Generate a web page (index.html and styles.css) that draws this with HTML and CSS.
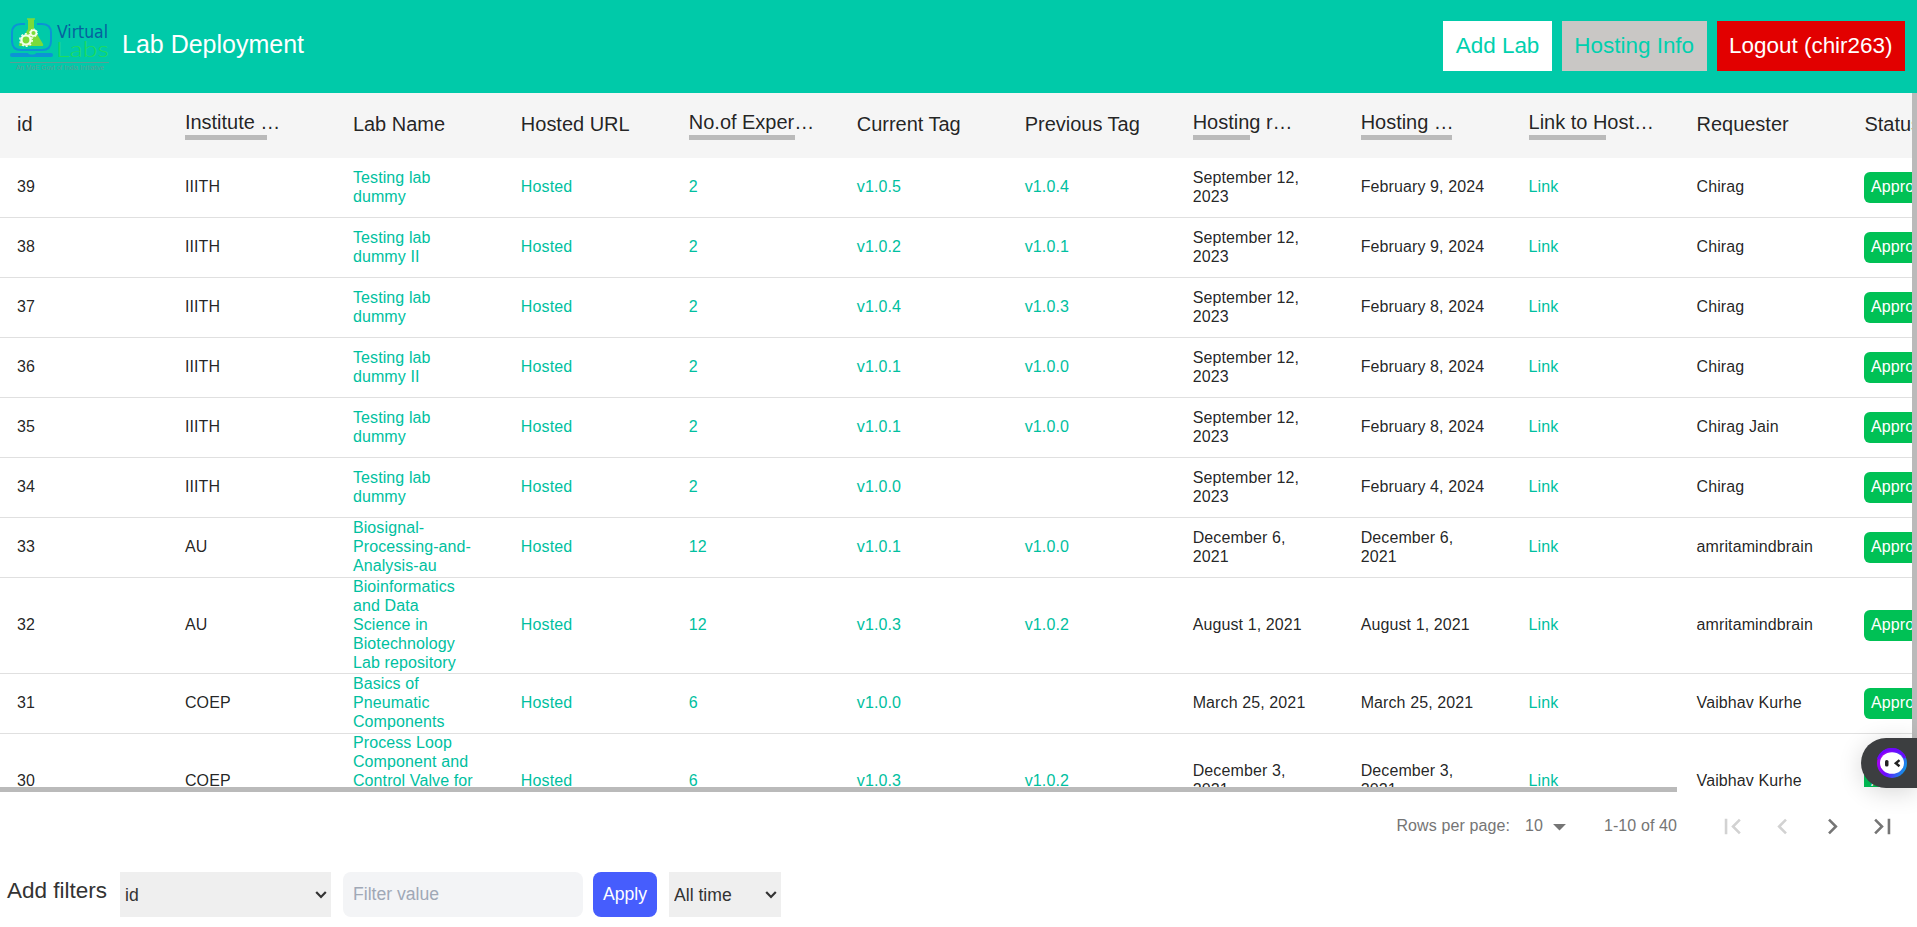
FILE: index.html
```html
<!DOCTYPE html>
<html lang="en">
<head>
<meta charset="utf-8">
<title>Lab Deployment</title>
<link rel="stylesheet" href="styles.css">
</head>
<body>
<header class="topbar">
  <svg class="logo" width="102" height="56" viewBox="0 0 102 56">
    <path d="M17 6H13Q4 6 4 15V23Q4 32 13 32H34Q43 32 43 23V15Q43 6 34 6H29" fill="none" stroke="#0c93d6" stroke-width="2"/>
    <path d="M20 1H26V11L35 26Q36 28 33.500 28H12.500Q10 28 11 26L20 11Z" fill="#7bdb3a"/>
    <path d="M19 1H27" stroke="#7bdb3a" stroke-width="1.500"/>
    <circle cx="18" cy="22" r="4.600" fill="none" stroke="#f4ffe9" stroke-width="2.400"/>
    <circle cx="18" cy="22" r="6.200" fill="none" stroke="#f4ffe9" stroke-width="1.500" stroke-dasharray="2 1.900"/>
    <circle cx="25.500" cy="15" r="2.900" fill="none" stroke="#f4ffe9" stroke-width="1.700"/>
    <circle cx="25.500" cy="15" r="4" fill="none" stroke="#f4ffe9" stroke-width="1" stroke-dasharray="1.500 1.600"/>
    <path d="M4 35H20Q20.500 36.500 24 36.500Q27.500 36.500 28 35H43Q45 35 45 37Q45 39 43 39H4Q2 39 2 37Q2 35 4 35Z" fill="#0c93d6"/>
    <text class="logo-virtual" x="49" y="19.500" textLength="51" lengthAdjust="spacingAndGlyphs">Virtual</text>
    <text class="logo-labs" x="48" y="38.500" textLength="53" lengthAdjust="spacingAndGlyphs">Labs</text>
    <path d="M2 44.500H101" stroke="#5e9d94" stroke-width="1"/>
    <text class="logo-tag" x="8" y="52" textLength="88" lengthAdjust="spacingAndGlyphs">An MoE Govt of India Initiative</text>
  </svg>
  <h1 class="title">Lab Deployment</h1>
  <nav class="actions">
    <button class="btn btn-add">Add Lab</button>
    <button class="btn btn-info">Hosting Info</button>
    <button class="btn btn-logout">Logout (chir263)</button>
  </nav>
</header>

<main class="table-area">
  <div class="grid">
    <div class="row head">
      <span>id</span>
      <span class="clip">Institute …<i class="bar" style="width:82px"></i></span>
      <span>Lab Name</span><span>Hosted URL</span>
      <span class="clip">No.of Exper…<i class="bar" style="width:106px"></i></span>
      <span>Current Tag</span><span>Previous Tag</span>
      <span class="clip">Hosting r…<i class="bar" style="width:57px"></i></span>
      <span class="clip">Hosting …<i class="bar" style="width:91px"></i></span>
      <span class="clip">Link to Host…<i class="bar" style="width:77px"></i></span>
      <span>Requester</span><span>Status</span>
    </div>
    <div class="row"><span>39</span><span>IIITH</span><a>Testing lab dummy</a><a>Hosted</a><a>2</a><a>v1.0.5</a><a>v1.0.4</a><span>September 12, 2023</span><span>February 9, 2024</span><a>Link</a><span>Chirag</span><span><b class="badge">Approved</b></span></div>
    <div class="row"><span>38</span><span>IIITH</span><a>Testing lab dummy II</a><a>Hosted</a><a>2</a><a>v1.0.2</a><a>v1.0.1</a><span>September 12, 2023</span><span>February 9, 2024</span><a>Link</a><span>Chirag</span><span><b class="badge">Approved</b></span></div>
    <div class="row"><span>37</span><span>IIITH</span><a>Testing lab dummy</a><a>Hosted</a><a>2</a><a>v1.0.4</a><a>v1.0.3</a><span>September 12, 2023</span><span>February 8, 2024</span><a>Link</a><span>Chirag</span><span><b class="badge">Approved</b></span></div>
    <div class="row"><span>36</span><span>IIITH</span><a>Testing lab dummy II</a><a>Hosted</a><a>2</a><a>v1.0.1</a><a>v1.0.0</a><span>September 12, 2023</span><span>February 8, 2024</span><a>Link</a><span>Chirag</span><span><b class="badge">Approved</b></span></div>
    <div class="row"><span>35</span><span>IIITH</span><a>Testing lab dummy</a><a>Hosted</a><a>2</a><a>v1.0.1</a><a>v1.0.0</a><span>September 12, 2023</span><span>February 8, 2024</span><a>Link</a><span>Chirag Jain</span><span><b class="badge">Approved</b></span></div>
    <div class="row"><span>34</span><span>IIITH</span><a>Testing lab dummy</a><a>Hosted</a><a>2</a><a>v1.0.0</a><a></a><span>September 12, 2023</span><span>February 4, 2024</span><a>Link</a><span>Chirag</span><span><b class="badge">Approved</b></span></div>
    <div class="row"><span>33</span><span>AU</span><a>Biosignal-Processing-and-Analysis-au</a><a>Hosted</a><a>12</a><a>v1.0.1</a><a>v1.0.0</a><span>December 6, 2021</span><span>December 6, 2021</span><a>Link</a><span>amritamindbrain</span><span><b class="badge">Approved</b></span></div>
    <div class="row"><span>32</span><span>AU</span><a>Bioinformatics and Data Science in Biotechnology Lab repository</a><a>Hosted</a><a>12</a><a>v1.0.3</a><a>v1.0.2</a><span>August 1, 2021</span><span>August 1, 2021</span><a>Link</a><span>amritamindbrain</span><span><b class="badge">Approved</b></span></div>
    <div class="row"><span>31</span><span>COEP</span><a>Basics of Pneumatic Components</a><a>Hosted</a><a>6</a><a>v1.0.0</a><a></a><span>March 25, 2021</span><span>March 25, 2021</span><a>Link</a><span>Vaibhav Kurhe</span><span><b class="badge">Approved</b></span></div>
    <div class="row"><span>30</span><span>COEP</span><a>Process Loop Component and Control Valve for Flow Control Loop</a><a>Hosted</a><a>6</a><a>v1.0.3</a><a>v1.0.2</a><span>December 3, 2021</span><span>December 3, 2021</span><a>Link</a><span>Vaibhav Kurhe</span><span><b class="badge">Approved</b></span></div>
  </div>
  <div class="vbar"></div>
</main>
<div class="hbar"></div>

<div class="pager">
  <span class="pager-label">Rows per page:</span>
  <span class="pager-size">10</span>
  <svg class="caret" width="31" height="31" viewBox="0 0 24 24"><path d="M7 10l5 5 5-5z"/></svg>
  <span class="pager-range">1-10 of 40</span>
  <svg class="pg off" width="31" height="31" viewBox="0 0 24 24"><path d="M18.410 16.590L13.820 12l4.590-4.590L17 6l-6 6 6 6zM6 6h2v12H6z"/></svg>
  <svg class="pg off" width="31" height="31" viewBox="0 0 24 24"><path d="M15.410 7.410L14 6l-6 6 6 6 1.410-1.410L10.830 12z"/></svg>
  <svg class="pg" width="31" height="31" viewBox="0 0 24 24"><path d="M10 6L8.590 7.410 13.170 12l-4.580 4.590L10 18l6-6z"/></svg>
  <svg class="pg" width="31" height="31" viewBox="0 0 24 24"><path d="M5.590 7.410L10.180 12l-4.590 4.590L7 18l6-6-6-6zM16 6h2v12h-2z"/></svg>
</div>

<div class="filters">
  <label class="filters-label">Add filters</label>
  <select class="field-select wide"><option>id</option></select>
  <input class="field-input" placeholder="Filter value">
  <button class="apply">Apply</button>
  <select class="field-select"><option>All time</option></select>
</div>

<div class="assistant">
  <svg width="32" height="32" viewBox="0 0 32 32">
    <defs>
      <linearGradient id="ring" x1="0" y1="0.300" x2="1" y2="0.700">
        <stop offset="0" stop-color="#b400f0"/><stop offset="0.450" stop-color="#6a0cff"/><stop offset="1" stop-color="#0aa0e6"/>
      </linearGradient>
    </defs>
    <circle cx="16" cy="16" r="15" fill="url(#ring)"/>
    <path d="M2 12A14.500 14.500 0 0 1 29 11" fill="none" stroke="#6e08ff" stroke-width="2.500"/>
    <ellipse cx="16" cy="16" rx="12" ry="10.800" fill="#fff"/>
    <rect x="9" y="13" width="3.500" height="6.500" rx="1.600" fill="#222"/>
    <path d="M23.500 13.200L19.800 16.300L23.500 19.200" fill="none" stroke="#222" stroke-width="2.400"/>
  </svg>
</div>
</body>
</html>
```

FILE: styles.css
```css
* { box-sizing: border-box; }
body {
  margin: 0;
  height: 927px;
  overflow: hidden;
  display: flex;
  flex-direction: column;
  background: #fff;
  font-family: "Liberation Sans", Arial, sans-serif;
  font-size: 16px;
  color: rgba(0, 0, 0, 0.87);
}
button, input, select { font-family: inherit; border: 0; }

.topbar {
  flex: none;
  height: 93px;
  padding: 0 12px 1px 8px;
  display: flex;
  align-items: center;
  background: #00caa9;
}
.logo { margin-top: 0; }
.logo-virtual { font: 17.500px "DejaVu Sans", sans-serif; fill: #06619f; }
.logo-labs { font: 300 21px Lato, sans-serif; fill: #1fdc5c; }
.logo-tag { font: 6.500px "Liberation Sans", sans-serif; fill: #5b9f95; }
.title {
  margin: 0 0 0 12px;
  padding-bottom: 3px;
  font-size: 25px;
  font-weight: 400;
  color: #fff;
}
.actions { margin-left: auto; display: flex; gap: 10px; }
.btn { height: 50px; padding: 0 12.500px; font-size: 22.450px; white-space: nowrap; }
.btn-add { background: #fff; color: #00d0ae; }
.btn-info { background: #c9c7c5; color: #00d0ae; }
.btn-logout { background: #e20000; color: #fff; }

.table-area {
  flex: none;
  height: 694px;
  overflow: hidden;
  display: flex;
}
.grid { flex: 1; overflow: hidden; letter-spacing: 0.110px; }
.row {
  width: 2015.500px;
  min-height: 60px;
  display: grid;
  grid-template-columns: repeat(12, 167.960px);
  align-items: center;
  border-bottom: 1px solid #e0e0e0;
  line-height: 18.980px;
}
.row > * { padding: 0 26px 0 17px; }
.row > a { color: #00bfa0; }
.head {
  height: 65px;
  padding-bottom: 2px;
  background: #f5f5f5;
  border: 0;
  font-size: 20px;
  line-height: 25px;
  letter-spacing: -0.020px;
}
.head > * { padding-right: 0; white-space: nowrap; }
.clip { margin-top: 1px; display: flex; flex-direction: column; }
.bar { height: 5px; background: #bababa; }
.badge {
  display: inline-block;
  padding: 6px 6.500px;
  border-radius: 6px;
  background: #00c155;
  color: #fff;
  font-weight: 400;
  vertical-align: middle;
}
.vbar { width: 5px; background: #bababa; }
.hbar { flex: none; width: 1677px; height: 5px; background: #bababa; }

.pager {
  flex: none;
  height: 68px;
  padding-right: 19px;
  display: flex;
  align-items: center;
  justify-content: flex-end;
  color: #757575;
  fill: #757575;
  letter-spacing: 0.100px;
}
.pager-size { margin-left: 15px; }
.caret { margin: 1px 0 0 1px; }
.pager-range { margin: 0 40px 0 29px; }
.pg + .pg { margin-left: 19px; }
.off { fill: #d2d2d2; }

.filters {
  flex: none;
  height: 45px;
  margin-top: 12px;
  padding-left: 7px;
  display: flex;
}
.filters-label { width: 113px; padding-top: 6px; font-size: 22.500px; color: #333; white-space: nowrap; }
.field-select {
  width: 112px;
  height: 45px;
  padding: 0 20px 0 5px;
  appearance: none;
  background: #efefef url("data:image/svg+xml,%3Csvg xmlns='http://www.w3.org/2000/svg' width='12' height='8'%3E%3Cpath d='M1.200 1L6 6L10.800 1' fill='none' stroke='%23333' stroke-width='2.200'/%3E%3C/svg%3E") no-repeat right 4px center;
  color: #333;
  font-size: 17.600px;
  border-radius: 0;
}
.wide { width: 211px; }
.field-input {
  width: 240px;
  margin: 0 10px 0 12px;
  padding: 0 10px 1px;
  border-radius: 8px;
  background: #f3f4f6;
  font-size: 17.600px;
}
.field-input::placeholder { color: #a0a8b6; }
.apply {
  width: 64px;
  margin-right: 12px;
  padding: 0 0 1px;
  border-radius: 8px;
  background: #465dfd;
  color: #fff;
  font-size: 17.600px;
}

.assistant {
  position: absolute;
  right: 0;
  top: 738px;
  width: 56px;
  height: 50px;
  padding: 9px 0 0 15px;
  border-radius: 25px 0 0 25px;
  background: #3c3e40;
  box-shadow: 0 4px 24px rgba(0, 0, 0, 0.16);
}
```
